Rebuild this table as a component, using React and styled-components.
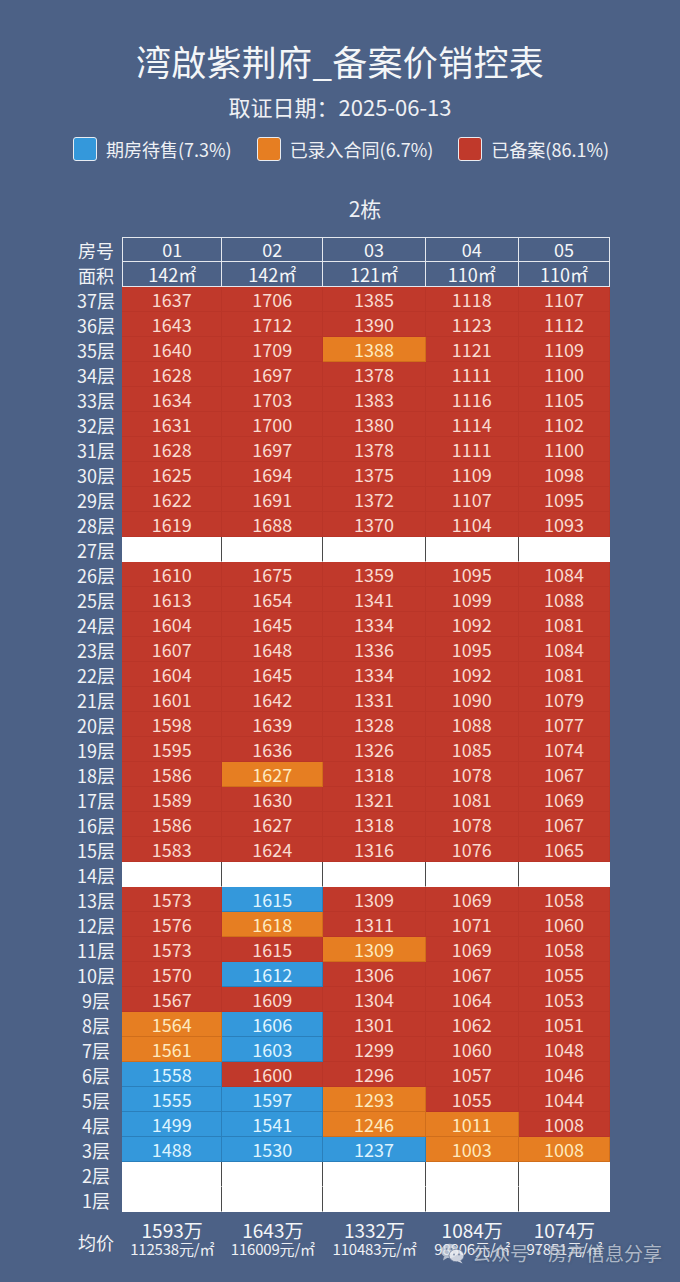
import React from "react";
import styled, { createGlobalStyle } from "styled-components";

const BG = "#4c6186";
const COLORS = {
  r: { bg: "#c0392b", fg: "#f9dbd1", line: "rgba(120,20,10,0.09)" },
  o: { bg: "#e67e22", fg: "#fdeabf", line: "rgba(120,50,0,0.2)" },
  b: { bg: "#3498db", fg: "#def4ff", line: "rgba(10,50,90,0.25)" },
  e: { bg: "#ffffff", fg: "#333", line: "#4a4a4a" },
};

const Global = createGlobalStyle`
  html, body { margin: 0; padding: 0; background: ${BG}; }
  body { font-family: "Noto Sans CJK SC", "Noto Sans", sans-serif; }
  #root { width: 680px; }
`;

const Page = styled.div`
  position: relative;
  width: 680px;
  height: 1282px;
  overflow: hidden;
  background: ${BG};
  color: #f2f4f7;
  display: flex;
  flex-direction: column;
  align-items: center;
  padding-top: 40px;
  box-sizing: border-box;
`;

const Title = styled.h1`
  margin: 0;
  font-size: 35px;
  line-height: 42px;
  font-weight: 400;
  color: #f4f6f8;
  letter-spacing: 0.3px;
`;

const Subtitle = styled.div`
  margin-top: 9px;
  font-size: 22px;
  line-height: 30px;
  color: #eef0f4;
`;

const Legend = styled.div`
  margin-top: 16px;
  display: flex;
  align-items: center;
  gap: 25px;
  padding-left: 2px;
`;

const LegendItem = styled.div`
  display: flex;
  align-items: center;
  gap: 9px;
  font-size: 18px;
  line-height: 24px;
  color: #eef0f4;
`;

const Swatch = styled.span`
  width: 22px;
  height: 22px;
  border-radius: 3px;
  border: 1.5px solid #e8ecf2;
  background: ${(p) => COLORS[p.$s].bg};
`;

const Building = styled.div`
  margin-top: 33px;
  font-size: 21px;
  line-height: 28px;
  color: #eef0f4;
  padding-left: 50px;
`;

const Table = styled.table`
  margin-top: 15px;
  align-self: flex-start;
  margin-left: 70px;
  border-collapse: separate;
  border-spacing: 0;
  table-layout: fixed;
  width: 540px;
`;

const Label = styled.th`
  width: 52px;
  height: 25px;
  padding: 0;
  font-weight: 400;
  font-size: 18px;
  line-height: 24px;
  color: #f0f2f5;
  text-align: center;
  white-space: nowrap;
`;

const HeadCell = styled.th`
  height: 25px;
  box-sizing: border-box;
  padding: 0;
  font-weight: 400;
  font-size: 18px;
  line-height: 23px;
  color: #f4f6f8;
  text-align: center;
  border-right: 1px solid #e4e8ee;
  border-bottom: 1px solid #e4e8ee;
  border-left: ${(p) => (p.$first ? "1px solid #e4e8ee" : "none")};
  border-top: ${(p) => (p.$top ? "1px solid #e4e8ee" : "none")};
`;

const Cell = styled.td`
  height: 25px;
  box-sizing: border-box;
  padding: 0;
  font-size: 18px;
  line-height: 24px;
  text-align: center;
  background: ${(p) => COLORS[p.$s].bg};
  color: ${(p) => COLORS[p.$s].fg};
  border-right: 1px solid ${(p) => (p.$last && p.$s === "e" ? "#ffffff" : COLORS[p.$s].line)};
  border-bottom: 1px solid ${(p) => (p.$s === "e" ? "#ffffff" : COLORS[p.$s].line)};
`;

const AvgLabel = styled.th`
  font-weight: 400;
  font-size: 18px;
  line-height: 24px;
  color: #f0f2f5;
  text-align: center;
  vertical-align: top;
  padding: 18px 0 0;
`;

const AvgCell = styled.td`
  padding: 8px 0 0;
  text-align: center;
  vertical-align: top;
  white-space: nowrap;
`;

const AvgTotal = styled.div`
  font-size: 19px;
  line-height: 20px;
  color: #f4f6f8;
`;

const AvgUnit = styled.div`
  font-size: 15px;
  line-height: 17px;
  color: #eef0f4;
  letter-spacing: -0.2px;
`;

const Watermark = styled.div`
  position: absolute;
  left: 440px;
  top: 1240px;
  display: flex;
  align-items: center;
  gap: 7px;
  font-size: 19px;
  line-height: 26px;
  color: rgba(222, 226, 234, 0.7);
  text-shadow: 0 0 3px rgba(40, 55, 80, 0.45);
  white-space: nowrap;
  z-index: 2;
`;

const WeChat = () => (
  <svg width="25" height="22" viewBox="0 0 25 22" aria-hidden="true">
    <ellipse cx="9.5" cy="9" rx="8.5" ry="7.2" fill="rgba(222,226,234,0.7)" />
    <path d="M4 14.5 L3 18.5 L8 15.5 Z" fill="rgba(222,226,234,0.7)" />
    <ellipse cx="16.5" cy="13.5" rx="7.5" ry="6.3" fill="rgba(236,238,242,0.8)" stroke="rgba(76,97,134,0.6)" strokeWidth="1" />
    <path d="M20.5 18.5 L22.5 21.5 L17.5 19.3 Z" fill="rgba(236,238,242,0.8)" />
    <circle cx="6.5" cy="7" r="1.1" fill="rgba(76,97,134,0.7)" />
    <circle cx="11.5" cy="7" r="1.1" fill="rgba(76,97,134,0.7)" />
    <circle cx="14" cy="12.5" r="0.9" fill="rgba(76,97,134,0.7)" />
    <circle cx="19" cy="12.5" r="0.9" fill="rgba(76,97,134,0.7)" />
  </svg>
);

const units = [
  { no: "01", area: "142㎡", w: 100 },
  { no: "02", area: "142㎡", w: 101 },
  { no: "03", area: "121㎡", w: 102 },
  { no: "04", area: "110㎡", w: 93 },
  { no: "05", area: "110㎡", w: 91 },
];

const E = null;
const rows = [
  [37, [1637, 1706, 1385, 1118, 1107], "rrrrr"],
  [36, [1643, 1712, 1390, 1123, 1112], "rrrrr"],
  [35, [1640, 1709, 1388, 1121, 1109], "rrorr"],
  [34, [1628, 1697, 1378, 1111, 1100], "rrrrr"],
  [33, [1634, 1703, 1383, 1116, 1105], "rrrrr"],
  [32, [1631, 1700, 1380, 1114, 1102], "rrrrr"],
  [31, [1628, 1697, 1378, 1111, 1100], "rrrrr"],
  [30, [1625, 1694, 1375, 1109, 1098], "rrrrr"],
  [29, [1622, 1691, 1372, 1107, 1095], "rrrrr"],
  [28, [1619, 1688, 1370, 1104, 1093], "rrrrr"],
  [27, [E, E, E, E, E], "eeeee"],
  [26, [1610, 1675, 1359, 1095, 1084], "rrrrr"],
  [25, [1613, 1654, 1341, 1099, 1088], "rrrrr"],
  [24, [1604, 1645, 1334, 1092, 1081], "rrrrr"],
  [23, [1607, 1648, 1336, 1095, 1084], "rrrrr"],
  [22, [1604, 1645, 1334, 1092, 1081], "rrrrr"],
  [21, [1601, 1642, 1331, 1090, 1079], "rrrrr"],
  [20, [1598, 1639, 1328, 1088, 1077], "rrrrr"],
  [19, [1595, 1636, 1326, 1085, 1074], "rrrrr"],
  [18, [1586, 1627, 1318, 1078, 1067], "rorrr"],
  [17, [1589, 1630, 1321, 1081, 1069], "rrrrr"],
  [16, [1586, 1627, 1318, 1078, 1067], "rrrrr"],
  [15, [1583, 1624, 1316, 1076, 1065], "rrrrr"],
  [14, [E, E, E, E, E], "eeeee"],
  [13, [1573, 1615, 1309, 1069, 1058], "rbrrr"],
  [12, [1576, 1618, 1311, 1071, 1060], "rorrr"],
  [11, [1573, 1615, 1309, 1069, 1058], "rrorr"],
  [10, [1570, 1612, 1306, 1067, 1055], "rbrrr"],
  [9, [1567, 1609, 1304, 1064, 1053], "rrrrr"],
  [8, [1564, 1606, 1301, 1062, 1051], "obrrr"],
  [7, [1561, 1603, 1299, 1060, 1048], "obrrr"],
  [6, [1558, 1600, 1296, 1057, 1046], "brrrr"],
  [5, [1555, 1597, 1293, 1055, 1044], "bborr"],
  [4, [1499, 1541, 1246, 1011, 1008], "bboor"],
  [3, [1488, 1530, 1237, 1003, 1008], "bbboo"],
  [2, [E, E, E, E, E], "eeeee"],
  [1, [E, E, E, E, E], "eeeee"],
];

const avgs = [
  ["1593万", "112538元/㎡"],
  ["1643万", "116009元/㎡"],
  ["1332万", "110483元/㎡"],
  ["1084万", "98806元/㎡"],
  ["1074万", "97851元/㎡"],
];

const legend = [
  ["b", "期房待售(7.3%)"],
  ["o", "已录入合同(6.7%)"],
  ["r", "已备案(86.1%)"],
];

export default function App() {
  return (
    <Page>
      <Global />
      <Title>湾啟紫荆府_备案价销控表</Title>
      <Subtitle>取证日期：2025-06-13</Subtitle>
      <Legend>
        {legend.map(([s, t]) => (
          <LegendItem key={s}>
            <Swatch $s={s} />
            {t}
          </LegendItem>
        ))}
      </Legend>
      <Building>2栋</Building>
      <Table>
        <colgroup>
          <col style={{ width: 52 }} />
          {units.map((u) => (
            <col key={u.no} style={{ width: u.w }} />
          ))}
        </colgroup>
        <thead>
          <tr>
            <Label>房号</Label>
            {units.map((u, i) => (
              <HeadCell key={u.no} $top $first={i === 0}>
                {u.no}
              </HeadCell>
            ))}
          </tr>
          <tr>
            <Label>面积</Label>
            {units.map((u, i) => (
              <HeadCell key={u.no} $first={i === 0}>
                {u.area}
              </HeadCell>
            ))}
          </tr>
        </thead>
        <tbody>
          {rows.map(([floor, vals, st]) => (
            <tr key={floor}>
              <Label>{floor}层</Label>
              {vals.map((v, i) => (
                <Cell key={i} $s={st[i]} $last={i === 4}>
                  {v}
                </Cell>
              ))}
            </tr>
          ))}
          <tr>
            <AvgLabel>均价</AvgLabel>
            {avgs.map(([a, b], i) => (
              <AvgCell key={i}>
                <AvgTotal>{a}</AvgTotal>
                <AvgUnit>{b}</AvgUnit>
              </AvgCell>
            ))}
          </tr>
        </tbody>
      </Table>
      <Watermark>
        <WeChat />
        <span>公众号·房产信息分享</span>
      </Watermark>
    </Page>
  );
}
